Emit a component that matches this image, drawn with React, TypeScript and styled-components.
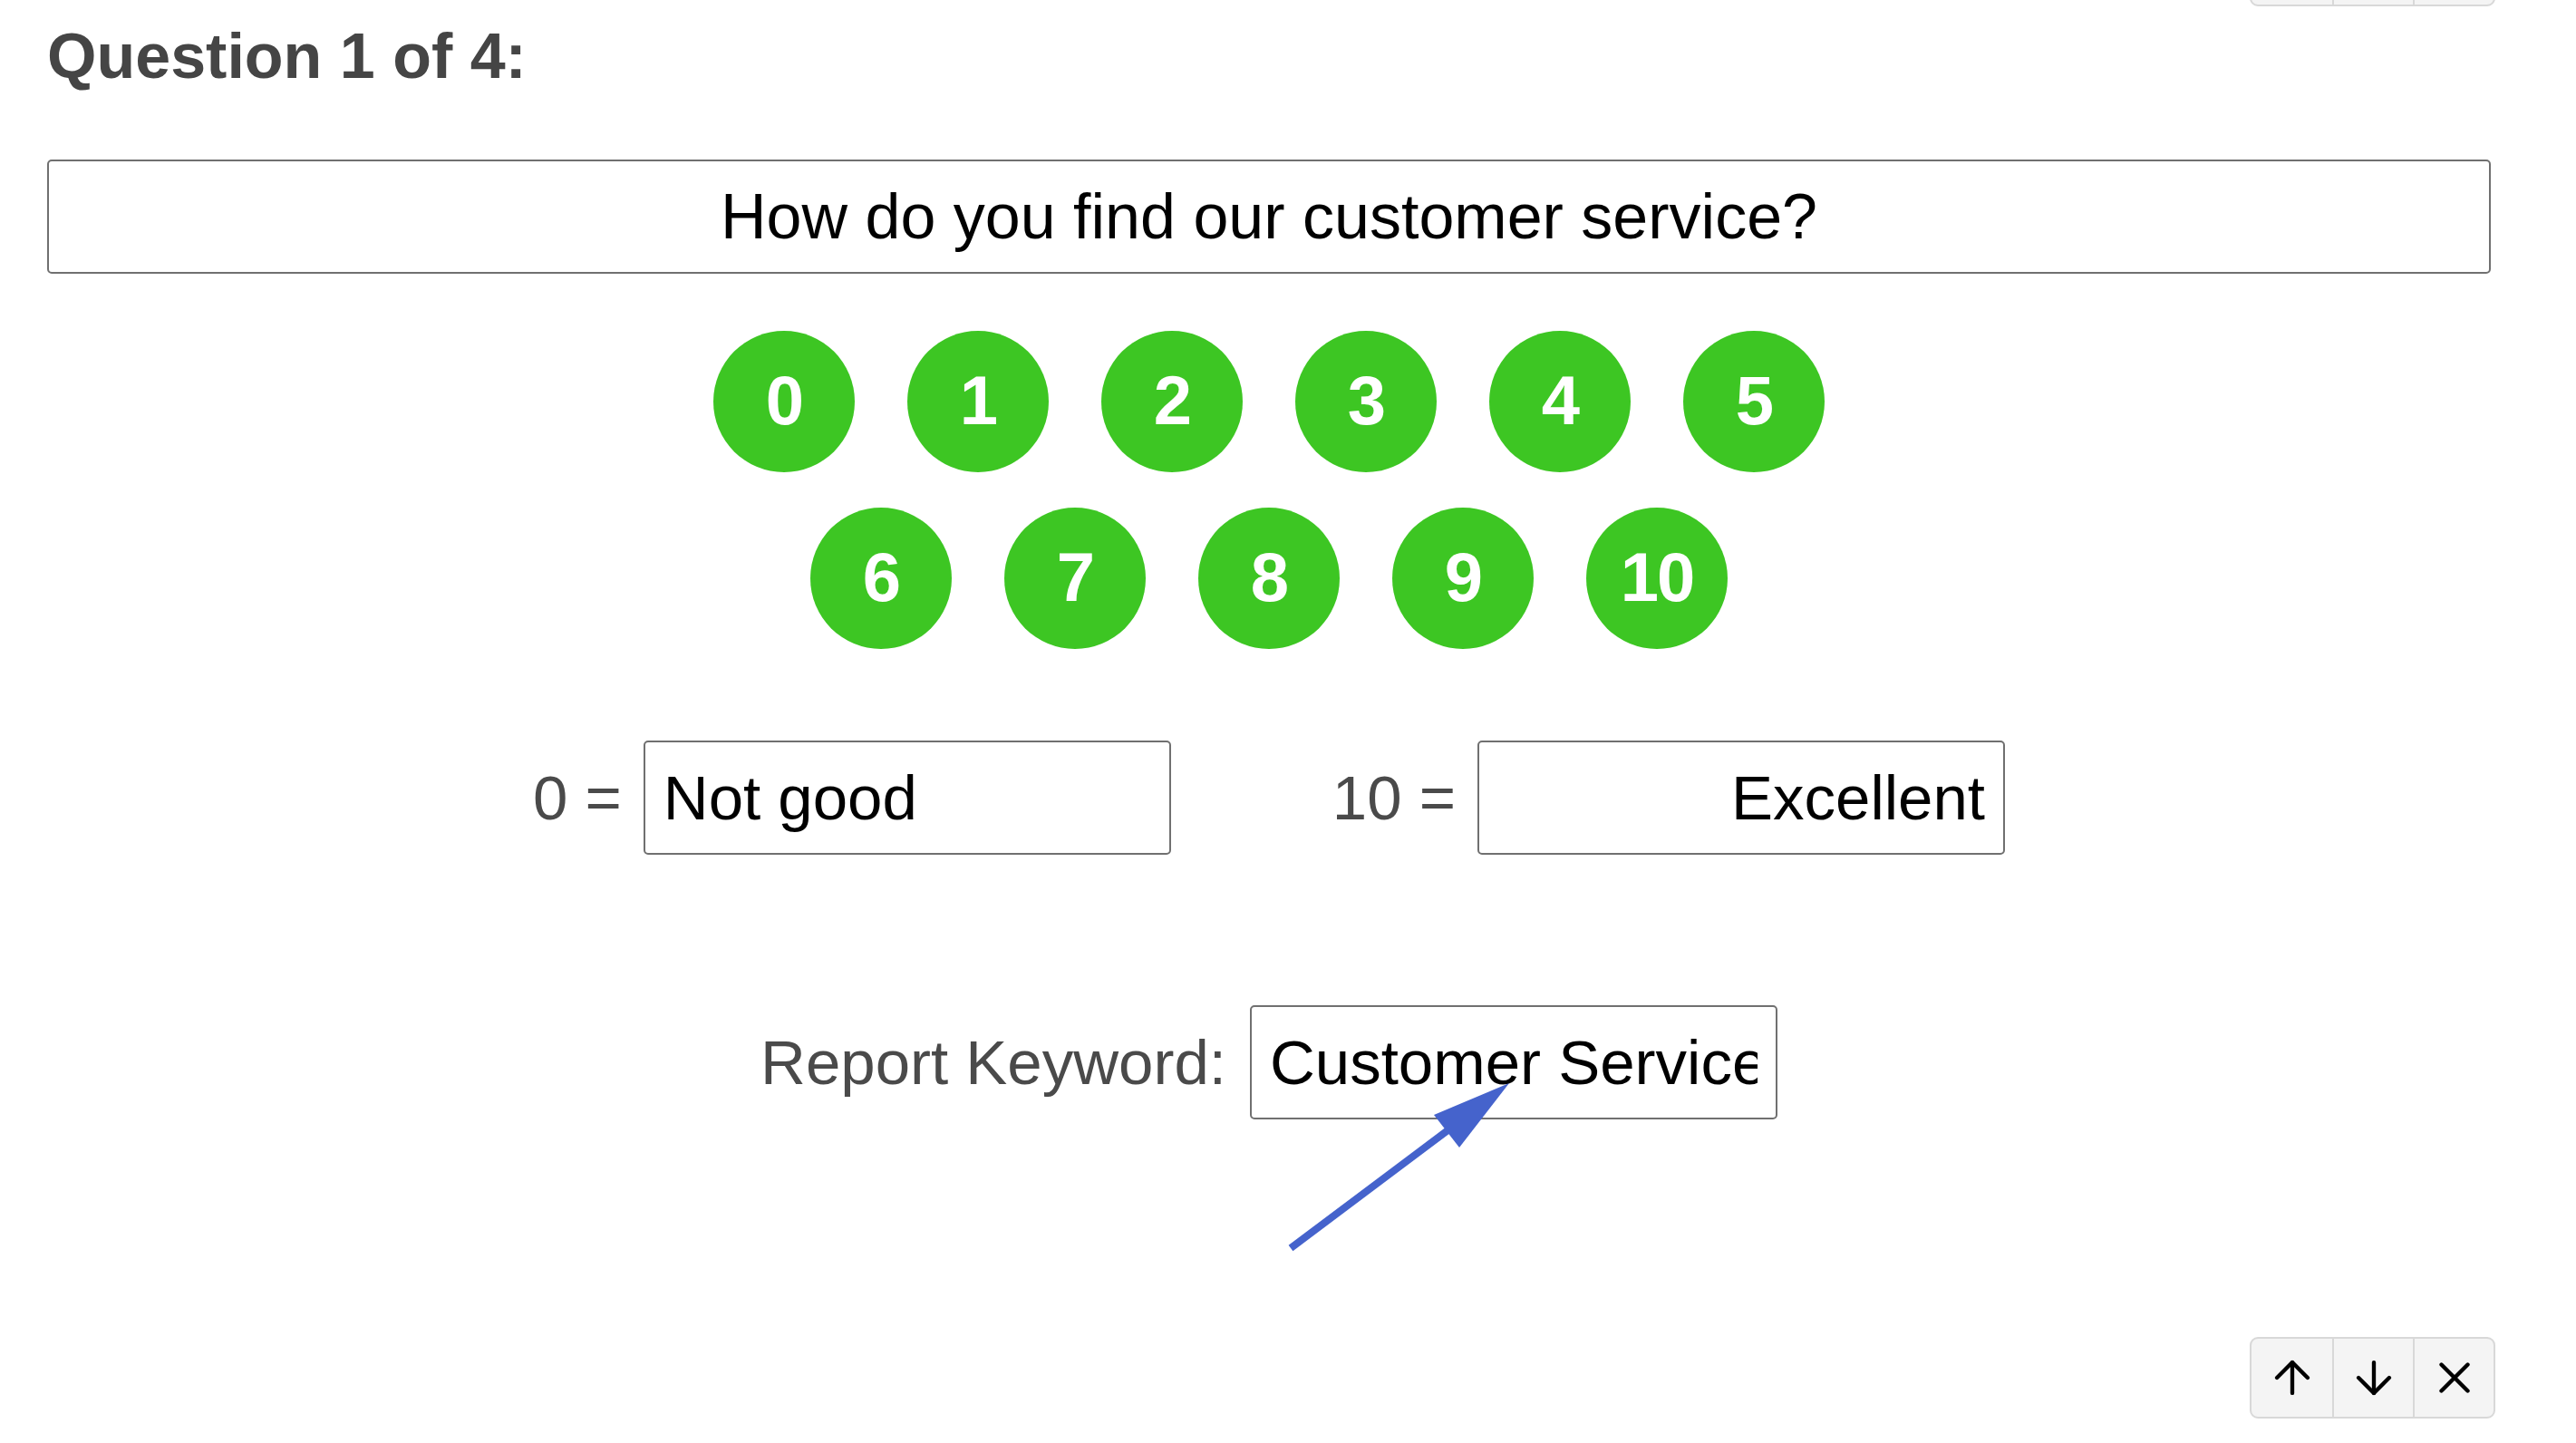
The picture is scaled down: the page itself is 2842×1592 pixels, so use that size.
import styled, { createGlobalStyle } from "styled-components";
import { ArrowUp, ArrowDown, X } from "lucide-react";

const GlobalStyle = createGlobalStyle`
  html, body {
    margin: 0;
    padding: 0;
    background: #ffffff;
  }
  body {
    font-family: "Liberation Sans", Arial, Helvetica, sans-serif;
  }
`;

const SCORES = [0, 1, 2, 3, 4, 5, 6, 7, 8, 9, 10];

const Page = styled.div`
  position: relative;
  width: 2842px;
  min-height: 1592px;
  overflow: hidden;
`;

// tail of the previous question's toolbar, scrolled mostly out of view
const PrevTools = styled.div`
  height: 7px;
  overflow: hidden;
  display: flex;
  align-items: flex-end;
  justify-content: flex-end;
  width: 2753px;
`;

const Content = styled.div`
  margin-left: 52px;
  width: 2696px;
  display: flex;
  flex-direction: column;
`;

const Heading = styled.h2`
  margin: 20px 0 0;
  font-size: 70px;
  line-height: 70px;
  font-weight: 700;
  color: #454545;
`;

const QuestionInput = styled.input`
  box-sizing: border-box;
  margin-top: 79px;
  width: 100%;
  height: 126px;
  border: 2px solid #707070;
  border-radius: 5px;
  font-family: inherit;
  font-size: 70px;
  color: #000;
  text-align: center;
  padding: 0 20px;
  outline: none;
`;

const ScaleGrid = styled.div`
  margin: 63px auto 0;
  width: 1300px;
  display: flex;
  flex-wrap: wrap;
  justify-content: center;
  column-gap: 58px;
  row-gap: 39px;
`;

const ScoreDot = styled.div`
  width: 156px;
  height: 156px;
  border-radius: 50%;
  background: #3dc623;
  color: #fff;
  display: flex;
  align-items: center;
  justify-content: center;
  padding-bottom: 4px;
  box-sizing: border-box;
  font-size: 76px;
  font-weight: 700;
  letter-spacing: -2px;
`;

const AnchorRow = styled.div`
  margin-top: 101px;
  display: flex;
  justify-content: center;
  align-items: center;
  gap: 178px;
`;

const AnchorGroup = styled.div`
  display: flex;
  align-items: center;
  gap: 24px;
`;

const FieldLabel = styled.span`
  font-size: 69px;
  color: #4a4a4a;
  white-space: nowrap;
`;

const TextField = styled.input<{ $align?: "left" | "right" }>`
  box-sizing: border-box;
  width: 582px;
  height: 126px;
  border: 2px solid #707070;
  border-radius: 5px;
  padding: 0 20px;
  font-family: inherit;
  font-size: 69px;
  color: #000;
  text-align: ${(p) => p.$align ?? "left"};
  outline: none;
  background: #fff;
`;

const KeywordRow = styled.div`
  margin-top: 166px;
  display: flex;
  justify-content: center;
  align-items: center;
  gap: 26px;
`;

const Footer = styled.div`
  margin-top: 240px;
  margin-right: -5px;
  display: flex;
  justify-content: flex-end;
`;

const Toolbar = styled.div`
  display: flex;
  border: 2px solid #d8d8d8;
  border-radius: 9px;
  background: #f4f4f4;
  overflow: hidden;
`;

const ToolButton = styled.button`
  width: 89px;
  height: 86px;
  padding: 0;
  border: none;
  background: transparent;
  display: flex;
  align-items: center;
  justify-content: center;
  color: #000;
  & + & {
    border-left: 2px solid #d8d8d8;
  }
`;

const Annotation = styled.svg`
  position: absolute;
  left: 0;
  top: 0;
  pointer-events: none;
`;

function Tools() {
  return (
    <Toolbar>
      <ToolButton aria-label="Move up">
        <ArrowUp size={58} strokeWidth={1.8} />
      </ToolButton>
      <ToolButton aria-label="Move down">
        <ArrowDown size={58} strokeWidth={1.8} />
      </ToolButton>
      <ToolButton aria-label="Remove">
        <X size={58} strokeWidth={1.8} />
      </ToolButton>
    </Toolbar>
  );
}

export default function App() {
  return (
    <Page>
      <GlobalStyle />
      <PrevTools>
        <Tools />
      </PrevTools>
      <Content>
        <Heading>Question 1 of 4:</Heading>
        <QuestionInput readOnly value="How do you find our customer service?" />
        <ScaleGrid>
          {SCORES.map((n) => (
            <ScoreDot key={n}>{n}</ScoreDot>
          ))}
        </ScaleGrid>
        <AnchorRow>
          <AnchorGroup>
            <FieldLabel>0 =</FieldLabel>
            <TextField readOnly value="Not good" />
          </AnchorGroup>
          <AnchorGroup>
            <FieldLabel>10 =</FieldLabel>
            <TextField readOnly value="Excellent" $align="right" />
          </AnchorGroup>
        </AnchorRow>
        <KeywordRow>
          <FieldLabel>Report Keyword:</FieldLabel>
          <TextField readOnly value="Customer Service" />
        </KeywordRow>
        <Footer>
          <Tools />
        </Footer>
      </Content>
      <Annotation width="2842" height="1592" viewBox="0 0 2842 1592">
        <line x1="1424" y1="1377" x2="1600" y2="1245" stroke="#4563cc" strokeWidth="8" />
        <polygon points="1665,1195 1582,1230 1610,1266" fill="#4563cc" />
      </Annotation>
    </Page>
  );
}
